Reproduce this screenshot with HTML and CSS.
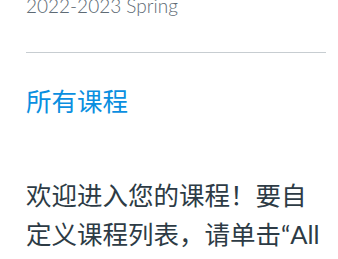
FILE: index.html
```html
<!DOCTYPE html>
<html lang="zh-CN">
<head>
    <meta charset="UTF-8">
    <meta name="viewport" content="width=device-width, initial-scale=1.0">
    <title>控制面板</title>
    <link rel="stylesheet" href="styles.css">
</head>
<body>
    <div class="dashboard">
        <div class="term">2022-2023 Spring</div>
        <hr class="divider">
        <a class="all-courses" href="#">所有课程</a>
        <p class="welcome">欢迎进入您的课程！要自定义课程列表，请单击“All Courses”链接并为课程加上星号以在控制面板中显示它们。</p>
    </div>
</body>
</html>
```

FILE: styles.css
```css
body {
    font-family: Lato, "Noto Sans CJK SC", sans-serif;
    margin: 0;
    padding: 0 12px 0 26px;
    background-color: #ffffff;
    color: #2d3b45;
    overflow: hidden;
}
.dashboard {
    margin-top: -6px;
}
.term {
    font-size: 19px;
    font-weight: 300;
    line-height: 24px;
    color: #5d6a74;
}
.divider {
    border: none;
    border-top: 1px solid #c7cdd1;
    margin: 34px 0 0;
}
.all-courses {
    display: block;
    margin-top: 31px;
    font-size: 25.5px;
    line-height: 34px;
    color: #0a8fe0;
    text-decoration: none;
}
.welcome {
    margin: 58px 0 0;
    font-size: 25.5px;
    line-height: 39px;
}
```
